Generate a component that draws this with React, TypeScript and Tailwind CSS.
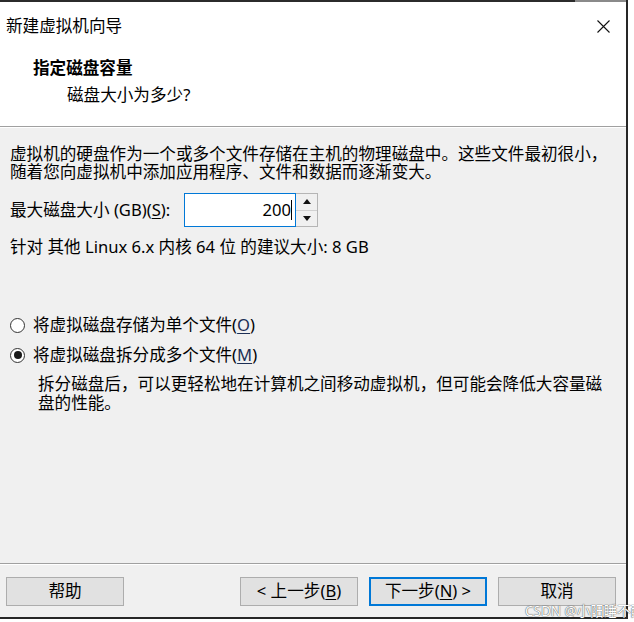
import React from 'react';

const FONT = "font-['Noto_Sans','Noto_Sans_CJK_SC',sans-serif]";

function Radio({ checked }: { checked?: boolean }) {
  return (
    <span className="w-[15px] h-[15px] rounded-full border border-[#333] bg-white flex items-center justify-center shrink-0">
      {checked && <span className="w-[8px] h-[8px] rounded-full bg-[#1a1a1a]" />}
    </span>
  );
}

function Btn({ children, primary, className }: { children: React.ReactNode; primary?: boolean; className?: string }) {
  return (
    <div
      className={
        'h-[29px] w-[118px] flex items-center justify-center bg-[#e1e1e1] text-black leading-none ' +
        (primary ? 'border-2 border-[#0078d7]' : 'border border-[#adadad]') +
        (className ? ' ' + className : '')
      }
    >
      {children}
    </div>
  );
}

export default function App() {
  return (
    <div className={`w-[634px] h-[622px] bg-white relative text-[16.6px] text-black ${FONT}`}>
      <div className="w-[628px] h-[619px] flex flex-col border-r-2 border-b-2 border-[#262626]">
        {/* top edge */}
        <div className="h-[2px] flex shrink-0">
          <div className="w-[575px] bg-[#2b2b2b]" />
          <div className="flex-1 bg-[#8a8a8a]" />
        </div>

        {/* header */}
        <div className="h-[124px] bg-white flex flex-col shrink-0">
          <div className="h-[48px] flex items-center justify-between pl-[6px] pr-[16px]">
            <span className="leading-[20px]">新建虚拟机向导</span>
            <svg width="13" height="13" viewBox="0 0 13 13">
              <path d="M0.5 0.5 L12.5 12.5 M12.5 0.5 L0.5 12.5" stroke="#111" strokeWidth="1.1" fill="none" />
            </svg>
          </div>
          <div className="mt-[8px] pl-[33px] leading-[20px] font-bold">指定磁盘容量</div>
          <div className="mt-[7px] pl-[67px] leading-[20px]">磁盘大小为多少?</div>
        </div>
        <div className="h-[1px] bg-[#a0a0a0] shrink-0" />
        <div className="h-[1px] bg-white shrink-0" />

        {/* body */}
        <div className="flex-1 bg-[#f0f0f0] flex flex-col pt-[17px] pl-[10px] whitespace-nowrap">
          <div className="leading-[18px]">
            虚拟机的硬盘作为一个或多个文件存储在主机的物理磁盘中。这些文件最初很小，
          </div>
          <div className="leading-[18px]">随着您向虚拟机中添加应用程序、文件和数据而逐渐变大。</div>

          <div className="mt-[12px] h-[34px] flex items-center">
            <span className="w-[174px] leading-[20px]">
              最大磁盘大小 (GB)(<span className="underline underline-offset-2">S</span>):
            </span>
            <div className="w-[112px] h-[34px] border border-[#0078d7] bg-white flex items-center justify-end pr-[3px]">
              <span className="leading-[20px]">200</span>
              <span className="w-[1px] h-[20px] bg-black" />
            </div>
            <div className="w-[22px] h-[34px] border border-l-0 border-[#b5b5b5] bg-[#f0f0f0] flex flex-col">
              <div className="flex-1 flex items-center justify-center border-b border-[#d0d0d0]">
                <svg width="8" height="5" viewBox="0 0 8 5">
                  <path d="M0 5 L4 0 L8 5 Z" fill="#111" />
                </svg>
              </div>
              <div className="flex-1 flex items-center justify-center">
                <svg width="8" height="5" viewBox="0 0 8 5">
                  <path d="M0 0 L8 0 L4 5 Z" fill="#111" />
                </svg>
              </div>
            </div>
          </div>

          <div className="mt-[11px] leading-[18px]">针对 其他 Linux 6.x 内核 64 位 的建议大小: 8 GB</div>

          <div className="mt-[59px] h-[20px] flex items-center gap-[8px]">
            <Radio />
            <span className="leading-[20px]">
              将虚拟磁盘存储为单个文件(<span className="underline underline-offset-2 text-[#1c2f55]">O</span>)
            </span>
          </div>
          <div className="mt-[10px] h-[20px] flex items-center gap-[8px]">
            <Radio checked />
            <span className="leading-[20px]">
              将虚拟磁盘拆分成多个文件(<span className="underline underline-offset-2 text-[#1c2f55]">M</span>)
            </span>
          </div>
          <div className="mt-[9px] pl-[28px] leading-[19px]">
            拆分磁盘后，可以更轻松地在计算机之间移动虚拟机，但可能会降低大容量磁
            <br />
            盘的性能。
          </div>
        </div>

        {/* footer */}
        <div className="h-[1px] bg-[#a0a0a0] shrink-0" />
        <div className="h-[1px] bg-white shrink-0" />
        <div className="h-[52px] bg-[#f0f0f0] shrink-0 flex items-start pt-[12px] pl-[6px]">
          <Btn>帮助</Btn>
          <Btn className="ml-[116px]">
            &lt; 上一步(<span className="underline underline-offset-2">B</span>)
          </Btn>
          <Btn primary className="ml-[11px]">
            下一步(<span className="underline underline-offset-2">N</span>) &gt;
          </Btn>
          <Btn className="ml-[11px]">取消</Btn>
        </div>
      </div>

      <div className="absolute left-[525px] top-[603px] text-[13.5px] leading-[16px] text-white [text-shadow:0_0_1px_#555,0_0_1px_#555] whitespace-nowrap">
        CSDN @小阳睡不醒
      </div>
    </div>
  );
}
